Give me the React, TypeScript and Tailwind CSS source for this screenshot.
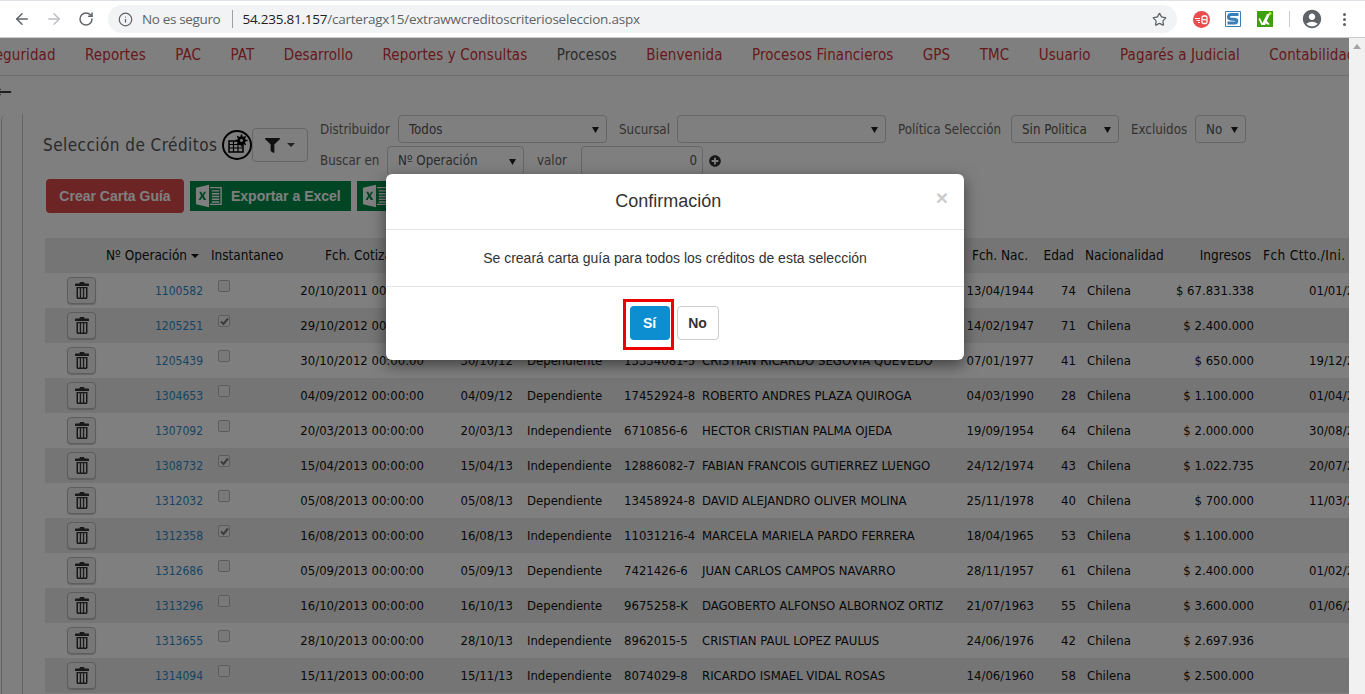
import { ArrowLeft, ArrowRight, RotateCw, Info, Star, MoveLeft } from "lucide-react";
import { FaFilter, FaPlusCircle } from "react-icons/fa";
import { MdAccountCircle } from "react-icons/md";

const navItems = [
  "Seguridad",
  "Reportes",
  "PAC",
  "PAT",
  "Desarrollo",
  "Reportes y Consultas",
  "Procesos",
  "Bienvenida",
  "Procesos Financieros",
  "GPS",
  "TMC",
  "Usuario",
  "Pagarés a Judicial",
  "Contabilidad",
];

type Row = {
  op: string;
  checked: boolean;
  cot: string;
  fecha: string;
  tipo: string;
  rut: string;
  nombre: string;
  nac: string;
  edad: string;
  ingresos: string;
  ctto: string;
};

const rows: Row[] = [
  { op: "1100582", checked: false, cot: "20/10/2011 00:00:00", fecha: "", tipo: "", rut: "", nombre: "", nac: "13/04/1944", edad: "74", ingresos: "$ 67.831.338", ctto: "01/01/2010" },
  { op: "1205251", checked: true, cot: "29/10/2012 00:00:00", fecha: "", tipo: "", rut: "", nombre: "", nac: "14/02/1947", edad: "71", ingresos: "$ 2.400.000", ctto: "" },
  { op: "1205439", checked: false, cot: "30/10/2012 00:00:00", fecha: "30/10/12", tipo: "Dependiente", rut: "13334081-5", nombre: "CRISTIAN RICARDO SEGOVIA QUEVEDO", nac: "07/01/1977", edad: "41", ingresos: "$ 650.000", ctto: "19/12/2010" },
  { op: "1304653", checked: false, cot: "04/09/2012 00:00:00", fecha: "04/09/12", tipo: "Dependiente", rut: "17452924-8", nombre: "ROBERTO ANDRES PLAZA QUIROGA", nac: "04/03/1990", edad: "28", ingresos: "$ 1.100.000", ctto: "01/04/2010" },
  { op: "1307092", checked: false, cot: "20/03/2013 00:00:00", fecha: "20/03/13", tipo: "Independiente", rut: "6710856-6", nombre: "HECTOR CRISTIAN PALMA OJEDA", nac: "19/09/1954", edad: "64", ingresos: "$ 2.000.000", ctto: "30/08/2010" },
  { op: "1308732", checked: true, cot: "15/04/2013 00:00:00", fecha: "15/04/13", tipo: "Independiente", rut: "12886082-7", nombre: "FABIAN FRANCOIS GUTIERREZ LUENGO", nac: "24/12/1974", edad: "43", ingresos: "$ 1.022.735", ctto: "20/07/2010" },
  { op: "1312032", checked: false, cot: "05/08/2013 00:00:00", fecha: "05/08/13", tipo: "Dependiente", rut: "13458924-8", nombre: "DAVID ALEJANDRO OLIVER MOLINA", nac: "25/11/1978", edad: "40", ingresos: "$ 700.000", ctto: "11/03/2010" },
  { op: "1312358", checked: true, cot: "16/08/2013 00:00:00", fecha: "16/08/13", tipo: "Independiente", rut: "11031216-4", nombre: "MARCELA MARIELA PARDO FERRERA", nac: "18/04/1965", edad: "53", ingresos: "$ 1.100.000", ctto: "" },
  { op: "1312686", checked: false, cot: "05/09/2013 00:00:00", fecha: "05/09/13", tipo: "Dependiente", rut: "7421426-6", nombre: "JUAN CARLOS CAMPOS NAVARRO", nac: "28/11/1957", edad: "61", ingresos: "$ 2.400.000", ctto: "01/02/2010" },
  { op: "1313296", checked: false, cot: "16/10/2013 00:00:00", fecha: "16/10/13", tipo: "Dependiente", rut: "9675258-K", nombre: "DAGOBERTO ALFONSO ALBORNOZ ORTIZ", nac: "21/07/1963", edad: "55", ingresos: "$ 3.600.000", ctto: "01/06/2010" },
  { op: "1313655", checked: false, cot: "28/10/2013 00:00:00", fecha: "28/10/13", tipo: "Independiente", rut: "8962015-5", nombre: "CRISTIAN PAUL LOPEZ PAULUS", nac: "24/06/1976", edad: "42", ingresos: "$ 2.697.936", ctto: "" },
  { op: "1314094", checked: false, cot: "15/11/2013 00:00:00", fecha: "15/11/13", tipo: "Independiente", rut: "8074029-8", nombre: "RICARDO ISMAEL VIDAL ROSAS", nac: "14/06/1960", edad: "58", ingresos: "$ 2.500.000", ctto: "" },
];

function Caret() {
  return (
    <svg width="7" height="7" viewBox="0 0 8 8" className="shrink-0">
      <path d="M0 1h8L4 8z" fill="#222" />
    </svg>
  );
}

function TrashIcon() {
  return (
    <svg width="14" height="17" viewBox="0 0 14 17" fill="#333">
      <path d="M5 0h4l.6 1.600H13c.6 0 1 .4 1 1V4H0V2.600c0-.6.4-1 1-1h3.400z" />
      <path d="M1.500 5h11v10.500c0 .8-.7 1.500-1.500 1.500H3c-.8 0-1.500-.7-1.500-1.500zm1.500 1.200V15.500h1.800V6.200zm3.100 0V15.500h1.800V6.200zm3.100 0V15.500H11V6.200z" fillRule="evenodd" />
    </svg>
  );
}

function ExcelIcon() {
  return (
    <svg width="26" height="24" viewBox="0 0 28 24">
      <path d="M0 3l14-3v24L0 21z" fill="#fff" />
      <path d="M3.500 7.500h2.200l1.500 2.800 1.600-2.800h2.100l-2.600 4.300 2.700 4.500H8.300l-1.700-3-1.700 3H2.800l2.700-4.500z" fill="#008a48" />
      <path d="M15 3h12v18H15" fill="none" stroke="#fff" strokeWidth="1.500" />
      <path d="M17 6.500h8M17 9.500h8M17 12.500h8M17 15.500h8M17 18.500h8" stroke="#fff" strokeWidth="1.500" />
    </svg>
  );
}

function GearTableIcon() {
  return (
    <svg width="30" height="30" viewBox="0 0 30 30" className="shrink-0">
      <circle cx="15" cy="15" r="14" fill="#fff" stroke="#000" strokeWidth="2" />
      <path d="M7 11h14v11H7z" fill="none" stroke="#000" strokeWidth="1.500" />
      <path d="M7 14.500h14M7 18h14M11.500 11v11M16 11v11" stroke="#000" strokeWidth="1.200" />
      <circle cx="19.500" cy="10.500" r="4.200" fill="#000" />
      <path d="M19.500 4.500v12M13.500 10.500h12M15.300 6.300l8.400 8.400M23.700 6.300l-8.400 8.400" stroke="#000" strokeWidth="1.600" />
      <circle cx="19.500" cy="10.500" r="1.400" fill="#fff" />
    </svg>
  );
}

function Select({ label, className }: { label: string; className: string }) {
  return (
    <div className={`flex shrink-0 items-center justify-between rounded border border-[#ccc] bg-white pl-[10px] pr-[7px] text-[#555] ${className}`}>
      <span>{label}</span>
      <Caret />
    </div>
  );
}

function Toolbar() {
  return (
    <div className="flex h-[38px] shrink-0 items-center border-b border-t border-b-[#ccc] border-t-[#dee1e6] bg-white">
      <div className="flex w-[108px] shrink-0 items-center pl-[13px]">
        <ArrowLeft size={18} strokeWidth={2} className="text-[#5f6368]" />
        <ArrowRight size={18} strokeWidth={2} className="ml-[14px] text-[#bcbfc3]" />
        <RotateCw size={16} strokeWidth={2.2} className="ml-[15px] text-[#5f6368]" />
      </div>
      <div className="flex h-7 w-[1069px] shrink-0 items-center rounded-full bg-[#f1f3f4] pl-[10px] pr-[10px] font-['Open_Sans',sans-serif] text-[13.500px]">
        <Info size={15} className="text-[#5f6368]" />
        <span className="ml-[9px] tracking-[-0.35px] text-[#5f6368]">No es seguro</span>
        <span className="ml-[12px] mr-[9px] h-[18px] w-px bg-[#9aa0a6]" />
        <span className="tracking-[-0.23px] text-[#202124]">54.235.81.157</span>
        <span className="tracking-[-0.23px] text-[#5f6368]">/carteragx15/extrawwcreditoscriterioseleccion.aspx</span>
        <Star size={15} strokeWidth={2} className="ml-auto text-[#5f6368]" />
      </div>
      <div className="ml-[16px] flex items-center">
        <svg width="17" height="17" viewBox="0 0 17 17">
          <circle cx="8.500" cy="8.500" r="8.500" fill="#e84c4f" />
          <path d="M2 7.500h5M3.500 9.500h3.500M5 11.500h2" stroke="#fff" strokeWidth="1.200" />
          <rect x="9" y="5" width="5" height="7.500" rx="1.500" fill="none" stroke="#fff" strokeWidth="1.300" />
          <path d="M9.500 8.700h4" stroke="#fff" strokeWidth="1.200" />
        </svg>
        <svg width="16" height="16" viewBox="0 0 16 16" className="ml-[15px]">
          <rect width="16" height="16" fill="#fff" />
          <path d="M.5.500h15v15H.5z" fill="none" stroke="#3b7fb8" />
          <path d="M13.500 3.500H6c-3 0-3.500 4-.5 4.500l5 .5c2 .3 1.500 3.500-.5 3.500H2.500" fill="none" stroke="#3b7fb8" strokeWidth="3" />
        </svg>
        <svg width="16" height="16" viewBox="0 0 16 16" className="ml-[16px]">
          <rect width="16" height="16" fill="#3f9f0f" />
          <path d="M3 7l2.500 5L10 3h3L8 14H4.500L1.500 8z" fill="#fff" />
          <path d="M8.500 8.500L13 13.500h-3l-2.500-3z" fill="#fff" />
          <circle cx="13" cy="2.500" r="1.500" fill="#b7f04a" />
        </svg>
        <span className="ml-[16px] h-[16px] w-px bg-[#c8cacc]" />
        <MdAccountCircle size={22} className="ml-[11px] text-[#5f6368]" />
        <div className="ml-[20px] flex flex-col gap-[2px]">
          <span className="size-[3px] rounded-full bg-[#5f6368]" />
          <span className="size-[3px] rounded-full bg-[#5f6368]" />
          <span className="size-[3px] rounded-full bg-[#5f6368]" />
        </div>
      </div>
    </div>
  );
}

function Nav() {
  return (
    <nav className="flex h-[38px] shrink-0 items-center whitespace-nowrap border-b border-[#ddd] pb-[2px] text-[15px] font-medium tracking-[.1px]">
      <div className="-ml-[14px] flex items-center gap-[29.400px]">
        {navItems.map((item) => (
          <span key={item} className={item === "Procesos" ? "text-[#555]" : "text-[#cf3239]"}>
            {item}
          </span>
        ))}
      </div>
    </nav>
  );
}

function Filters() {
  return (
    <div className="ml-[12px] flex flex-col gap-[3px] whitespace-nowrap text-[13.250px] text-[#666]">
      <div className="flex h-[28px] items-center">
        <span className="w-[78px] shrink-0 pt-px">Distribuidor</span>
        <Select label="Todos" className="h-[28px] w-[209px] pt-px" />
        <span className="ml-[12px] w-[58px] shrink-0 pt-px">Sucursal</span>
        <Select label="" className="h-[28px] w-[209px]" />
        <span className="ml-[12px] w-[113px] shrink-0 pt-px">Política Selección</span>
        <Select label="Sin Politica" className="h-[28px] w-[108px] pt-px" />
        <span className="ml-[12px] w-[64px] shrink-0 pt-px">Excluidos</span>
        <Select label="No" className="h-[28px] w-[51px] pt-px" />
      </div>
      <div className="flex h-[30px] items-center">
        <span className="w-[67px] shrink-0">Buscar en</span>
        <Select label="Nº Operación" className="h-[30px] w-[137px]" />
        <span className="ml-[13px] w-[44px] shrink-0">valor</span>
        <div className="flex h-[30px] w-[122px] items-center justify-end rounded border border-[#ccc] bg-white pr-[5px] text-[#555]">
          0
        </div>
        <FaPlusCircle size={12} className="ml-[6px] text-[#333]" />
      </div>
    </div>
  );
}

function Table() {
  return (
    <table className="w-[1400px] table-fixed border-collapse whitespace-nowrap text-[#111]">
      <colgroup>
        <col className="w-[55px]" />
        <col className="w-[108px]" />
        <col className="w-[85px]" />
        <col className="w-[137px]" />
        <col className="w-[89px]" />
        <col className="w-[87px]" />
        <col className="w-[90px]" />
        <col className="w-[262px]" />
        <col className="w-[81px]" />
        <col className="w-[41px]" />
        <col className="w-[90px]" />
        <col className="w-[88px]" />
        <col />
      </colgroup>
      <thead>
        <tr className="h-[35px] bg-[#ebebeb] text-[13.500px]">
          <th />
          <th className="pl-[6px] text-left font-medium">
            <span className="inline-flex items-center gap-[4px]">
              Nº Operación
              <span className="h-0 w-0 border-x-[4px] border-t-[4px] border-x-transparent border-t-[#111]" />
            </span>
          </th>
          <th className="pl-[3px] text-left font-medium">Instantaneo</th>
          <th className="pl-[32px] text-left font-medium">Fch. Cotización</th>
          <th />
          <th />
          <th />
          <th />
          <th className="pl-[3px] text-center font-medium">Fch. Nac.</th>
          <th className="pr-[6px] text-right font-medium">Edad</th>
          <th className="pl-[5px] text-left font-medium">Nacionalidad</th>
          <th className="pr-[7px] text-right font-medium">Ingresos</th>
          <th className="pl-[5px] text-left font-medium tracking-[.4px]">Fch Ctto./Ini.</th>
        </tr>
      </thead>
      <tbody>
        {rows.map((r, i) => (
          <tr key={r.op} className={`h-[35px] ${i % 2 === 1 ? "bg-[#ebebeb]" : ""}`}>
            <td className="pl-[22px]">
              <div className="flex h-[27px] w-[29px] items-center justify-center rounded border border-[#bbb] bg-[#eee] shadow-[0_1px_1px_rgba(0,0,0,.2)]">
                <TrashIcon />
              </div>
            </td>
            <td className="pr-[5px] text-right text-[12px] text-[#2f88c8]">{r.op}</td>
            <td className="pl-[10px] align-top pt-[7px]">
              <div className="flex size-3 items-center justify-center rounded-[2px] border border-[#bbb] bg-[#f2f2f2]">
                {r.checked && (
                  <svg width="9" height="9" viewBox="0 0 9 9">
                    <path d="M1 4.500l2.500 2.500L8 1.500" fill="none" stroke="#777" strokeWidth="2" />
                  </svg>
                )}
              </div>
            </td>
            <td className="pr-[6px] text-right">{r.cot}</td>
            <td className="pr-[6px] text-right">{r.fecha}</td>
            <td className="pl-[8px]">{r.tipo}</td>
            <td className="pl-[18px]">{r.rut}</td>
            <td className="pl-[6px]">{r.nombre}</td>
            <td className="pr-[5px] text-right">{r.nac}</td>
            <td className="pr-[4px] text-right">{r.edad}</td>
            <td className="pl-[7px]">Chilena</td>
            <td className="pr-[4px] text-right">{r.ingresos}</td>
            <td className="pl-[51px]">{r.ctto}</td>
          </tr>
        ))}
      </tbody>
    </table>
  );
}

function Modal() {
  return (
    <div className="absolute left-[386px] top-[136px] flex h-[186px] w-[578px] flex-col rounded-md bg-white font-['Liberation_Sans',Arial,sans-serif] shadow-[0_5px_15px_rgba(0,0,0,.5)]">
      <div className="flex h-[56px] items-center border-b border-[#e5e5e5] pl-[15px] pr-[16px]">
        <h4 className="flex-1 text-center text-[18px] text-[#333]">Confirmación</h4>
        <span className="pb-[8px] text-[21px] font-bold leading-none text-[#ccc]">×</span>
      </div>
      <div className="flex h-[57px] items-center justify-center border-b border-[#e5e5e5] text-[14px] text-[#333]">
        Se creará carta guía para todos los créditos de esta selección
      </div>
      <div className="flex flex-1 items-start justify-center gap-[7px] pr-[2px] pt-[19px] text-[14px] font-bold">
        <div className="relative">
          <button className="h-[34px] w-[40px] rounded bg-[#0d8ed1] text-white">Sí</button>
          <span className="absolute -left-[7px] -top-[7px] h-[51px] w-[51px] border-[3px] border-[#ee0000]" />
        </div>
        <button className="h-[34px] w-[42px] rounded border border-[#ccc] bg-white text-[#333]">No</button>
      </div>
    </div>
  );
}

export default function App() {
  return (
    <div className="flex h-[694px] w-[1365px] flex-col overflow-hidden bg-white font-['DejaVu_Sans_Condensed','DejaVu_Sans',sans-serif] text-[13px]">
      <Toolbar />
      <div className="flex min-h-0 flex-1">
        <main className="relative flex min-w-0 flex-1 flex-col overflow-hidden">
          <Nav />
          <div className="flex h-[38px] shrink-0 items-center pb-[6px]">
            <MoveLeft size={16} strokeWidth={2} className="-ml-[4px] text-black" />
          </div>
          <div className="flex min-h-0 flex-1">
            <aside className="ml-px w-[22px] shrink-0 rounded-tl-md border-l border-r border-[#ccc]" />
            <div className="min-w-0 flex-1 pl-[20px] pt-px">
              <div className="flex h-[64px]">
                <div className="mt-[13px] flex h-[34px] w-[265px] shrink-0 items-center">
                  <h2 className="w-[179px] shrink-0 whitespace-nowrap pt-[2px] text-[17px] font-medium tracking-[.45px] text-[#555]">Selección de Créditos</h2>
                  <GearTableIcon />
                  <div className="flex h-[34px] w-[56px] items-center justify-center gap-[7px] rounded border border-[#ccc] bg-white">
                    <FaFilter size={15} className="text-[#222]" />
                    <span className="h-0 w-0 border-x-[4px] border-t-[4px] border-x-transparent border-t-[#444]" />
                  </div>
                </div>
                <Filters />
              </div>
              <div className="ml-[3px] flex h-[59px] items-start font-['Liberation_Sans',Arial,sans-serif] text-[14px] font-bold">
                <button className="h-[34px] w-[138px] rounded bg-[#d94a48] text-white">Crear Carta Guía</button>
                <button className="ml-[6px] mt-[2px] flex h-[30px] w-[161px] items-center gap-[9px] bg-[#008a48] pl-[6px] text-white">
                  <ExcelIcon />
                  Exportar a Excel
                </button>
                <button className="ml-[6px] mt-[2px] flex h-[30px] w-[161px] items-center gap-[9px] bg-[#008a48] pl-[6px] text-white">
                  <ExcelIcon />
                </button>
              </div>
              <div className="pl-[2px]">
                <Table />
              </div>
            </div>
          </div>
          <div className="absolute inset-0 bg-black/50" />
          <Modal />
        </main>
        <div className="flex w-4 shrink-0 justify-center bg-[#f1f1f1] pt-[6px]">
          <span className="h-0 w-0 border-x-[4px] border-b-[5px] border-x-transparent border-b-[#a3a3a3]" />
        </div>
      </div>
    </div>
  );
}
